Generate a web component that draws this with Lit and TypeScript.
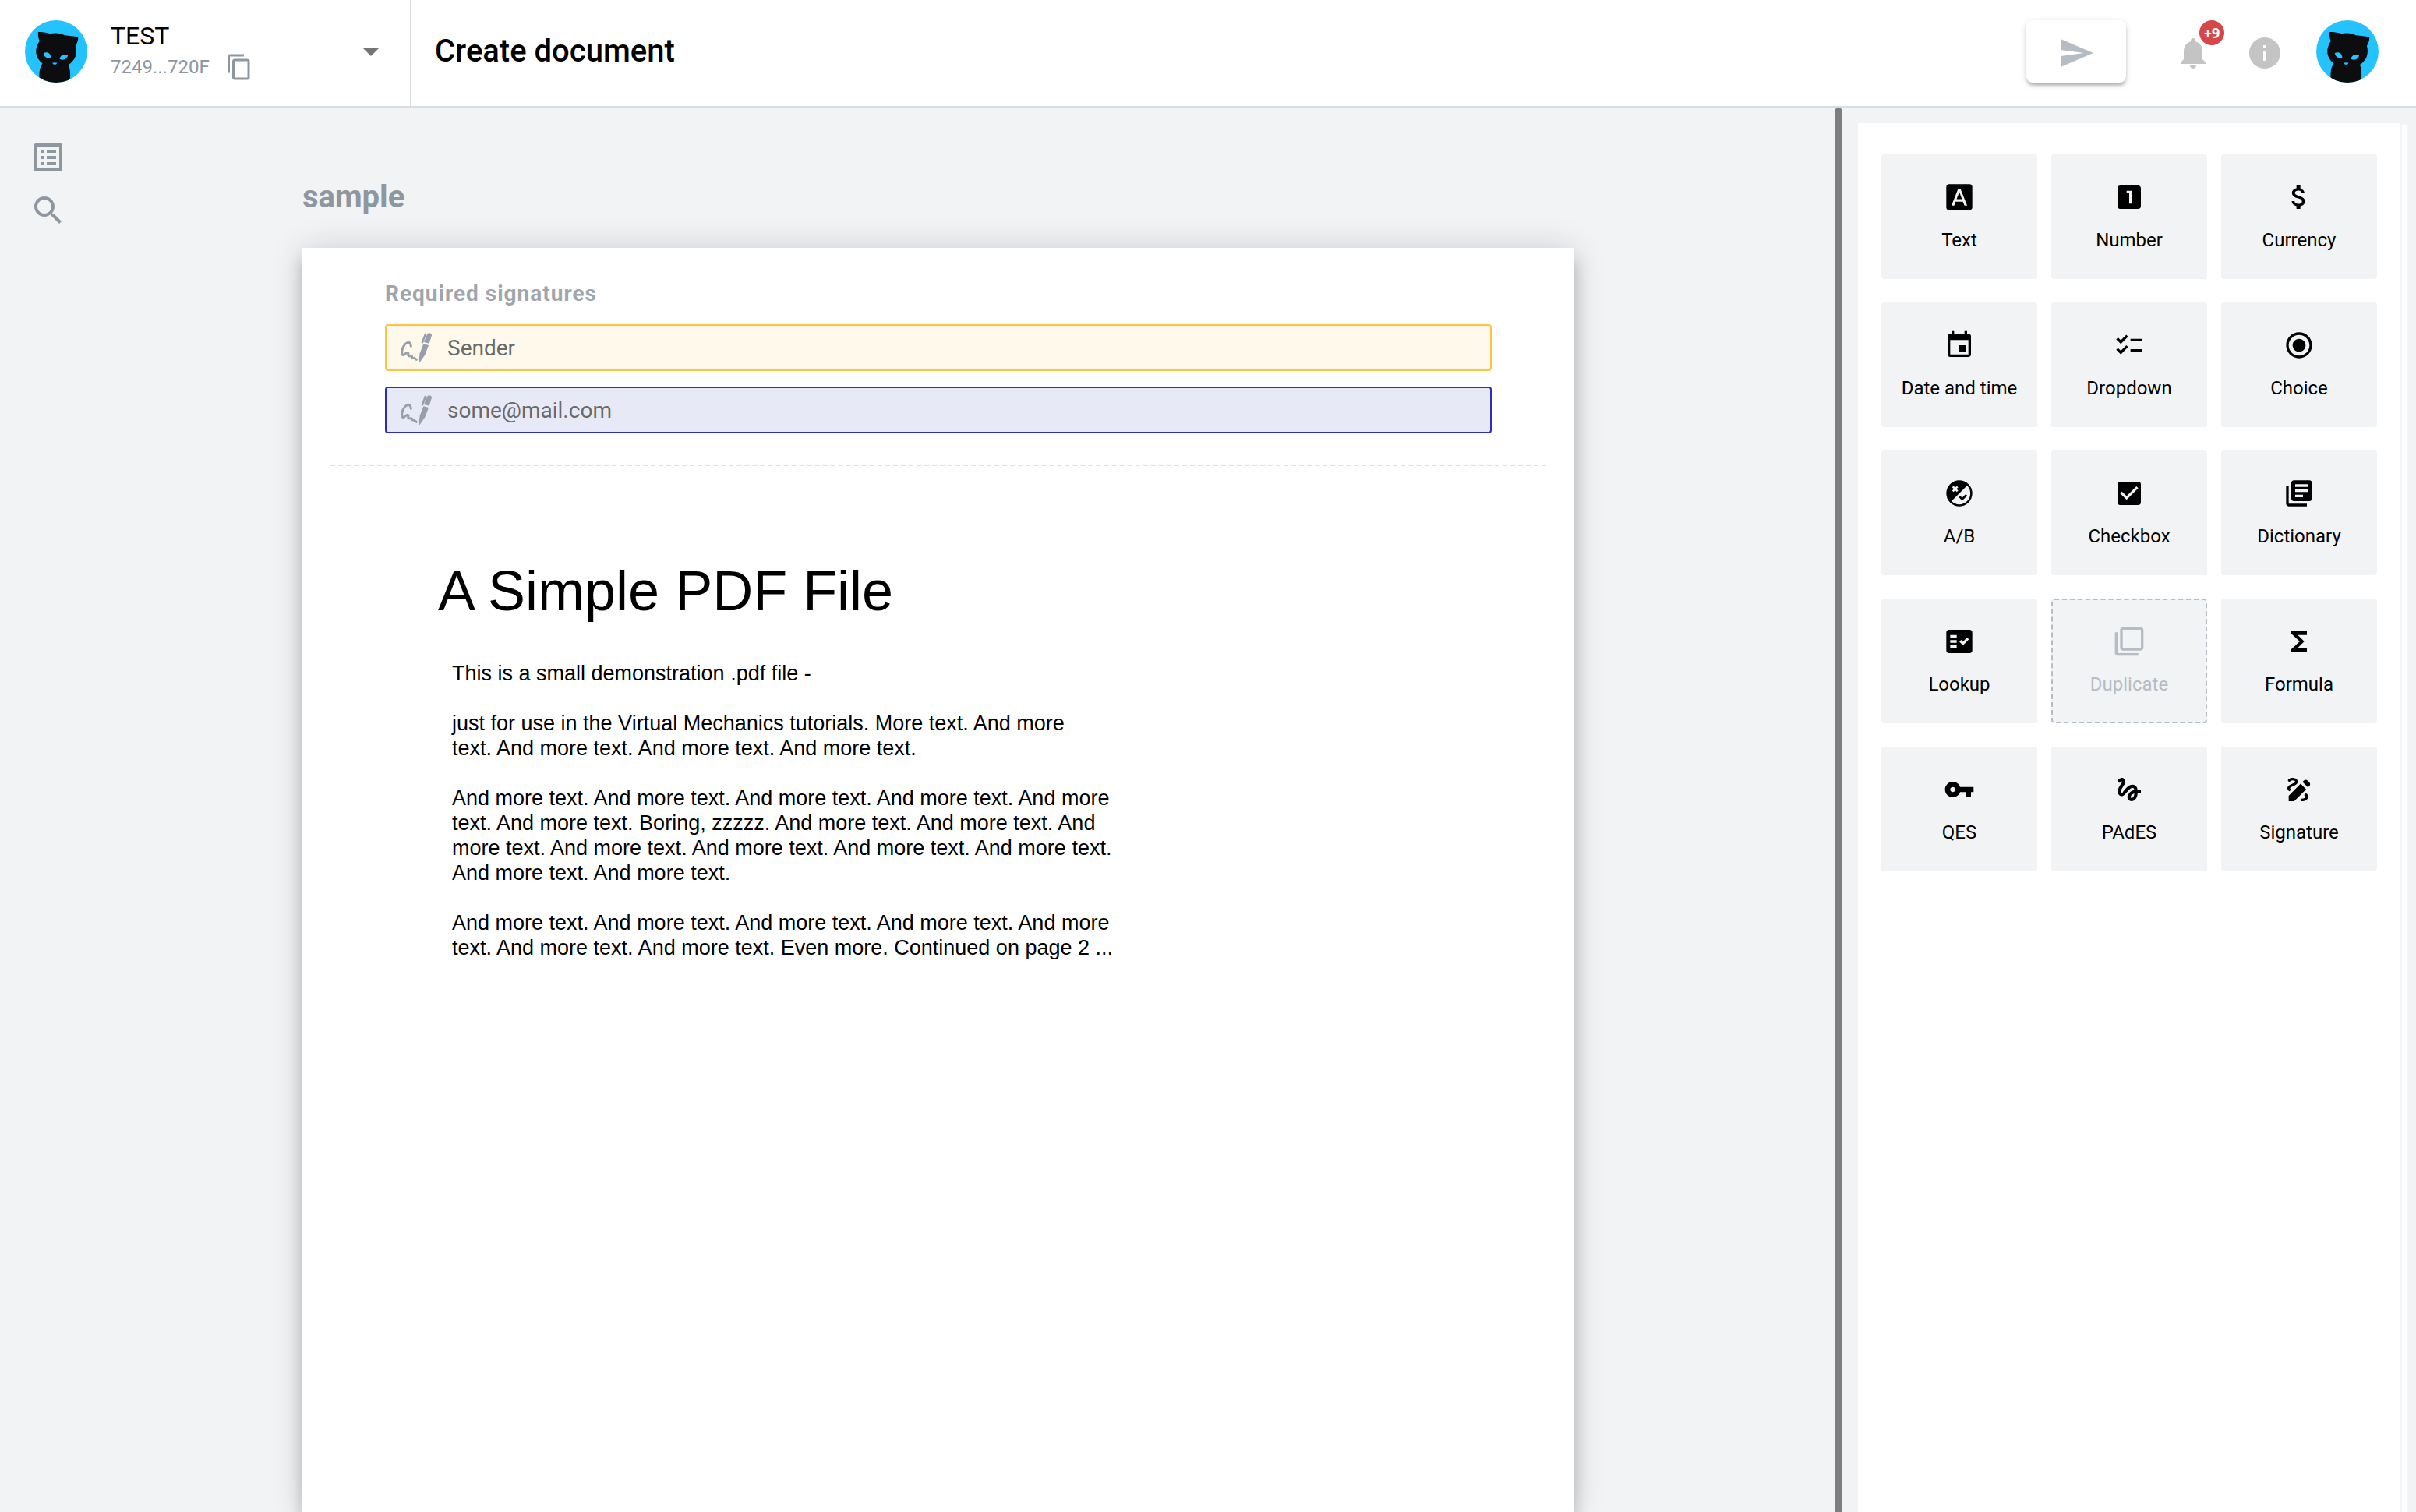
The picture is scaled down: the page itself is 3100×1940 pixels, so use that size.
import { LitElement, html, css, svg } from "lit";
import { customElement, property } from "lit/decorators.js";
import { classMap } from "lit/directives/class-map.js";

const ICONS: Record<string, unknown> = {
  copy: svg`<path d="M16 1H4c-1.1 0-2 .9-2 2v14h2V3h12V1zm3 4H8c-1.1 0-2 .9-2 2v14c0 1.1.9 2 2 2h11c1.1 0 2-.9 2-2V7c0-1.1-.9-2-2-2zm0 16H8V7h11v14z"/>`,
  caret: svg`<path d="M7 10l5 5 5-5z"/>`,
  list: svg`<path d="M19 5v14H5V5h14m1.1-2H3.9c-.5 0-.9.4-.9.9v16.2c0 .4.4.9.9.9h16.2c.4 0 .9-.5.9-.9V3.9c0-.5-.5-.9-.9-.9zM11 7h6v2h-6V7zm0 4h6v2h-6v-2zm0 4h6v2h-6v-2zM7 7h2v2H7V7zm0 4h2v2H7v-2zm0 4h2v2H7v-2z"/>`,
  search: svg`<path d="M15.5 14h-.79l-.28-.27C15.41 12.59 16 11.11 16 9.5 16 5.91 13.09 3 9.5 3S3 5.91 3 9.5 5.91 16 9.5 16c1.61 0 3.09-.59 4.23-1.57l.27.28v.79l5 4.99L20.49 19l-4.99-5zm-6 0C7.01 14 5 11.99 5 9.5S7.01 5 9.5 5 14 7.01 14 9.5 11.99 14 9.5 14z"/>`,
  send: svg`<path d="M2.01 21L23 12 2.01 3 2 10l15 2-15 2z"/>`,
  bell: svg`<path d="M12 22c1.1 0 2-.9 2-2h-4c0 1.1.9 2 2 2zm6-6v-5c0-3.07-1.63-5.64-4.5-6.32V4c0-.83-.67-1.5-1.5-1.5s-1.5.67-1.5 1.5v.68C7.64 5.36 6 7.92 6 11v5l-2 2v1h16v-1l-2-2z"/>`,
  info: svg`<path d="M12 2C6.48 2 2 6.48 2 12s4.48 10 10 10 10-4.48 10-10S17.52 2 12 2zm1 15h-2v-6h2v6zm0-8h-2V7h2v2z"/>`,
  text: svg`<path d="M9.93 13.5h4.14L12 7.98zM20 2H4c-1.1 0-2 .9-2 2v16c0 1.1.9 2 2 2h16c1.1 0 2-.9 2-2V4c0-1.1-.9-2-2-2zm-4.05 16.5l-1.14-3H9.17l-1.12 3H5.96l5.11-13h1.86l5.11 13h-2.09z"/>`,
  number: svg`<path d="M19 3H5c-1.1 0-2 .9-2 2v14c0 1.1.9 2 2 2h14c1.1 0 2-.9 2-2V5c0-1.1-.9-2-2-2zm-5 14h-2V9h-2V7h4v10z"/>`,
  currency: svg`<path d="M11.8 10.9c-2.27-.59-3-1.2-3-2.15 0-1.09 1.01-1.85 2.7-1.85 1.78 0 2.44.85 2.5 2.1h2.21c-.07-1.72-1.12-3.3-3.21-3.81V3h-3v2.16c-1.94.42-3.5 1.68-3.5 3.61 0 2.31 1.91 3.46 4.7 4.13 2.5.6 3 1.48 3 2.41 0 .69-.49 1.79-2.7 1.79-2.06 0-2.87-.92-2.98-2.1h-2.2c.12 2.19 1.76 3.42 3.68 3.83V21h3v-2.15c1.95-.37 3.5-1.5 3.5-3.55 0-2.84-2.43-3.81-4.7-4.4z"/>`,
  date: svg`<path d="M17 12h-5v5h5v-5zM16 1v2H8V1H6v2H5c-1.11 0-1.99.9-1.99 2L3 19c0 1.1.89 2 2 2h14c1.1 0 2-.9 2-2V5c0-1.1-.9-2-2-2h-1V1h-2zm3 18H5V8h14v11z"/>`,
  dropdown: svg`<path d="M22 7h-9v2h9V7zm0 8h-9v2h9v-2zM5.54 11L2 7.46l1.41-1.41 2.12 2.12 4.24-4.24 1.41 1.41L5.54 11zm0 8L2 15.46l1.41-1.41 2.12 2.12 4.24-4.24 1.41 1.41L5.54 19z"/>`,
  choice: svg`<path d="M12 7c-2.76 0-5 2.24-5 5s2.24 5 5 5 5-2.24 5-5-2.24-5-5-5zm0-5C6.48 2 2 6.48 2 12s4.48 10 10 10 10-4.48 10-10S17.52 2 12 2zm0 18c-4.42 0-8-3.58-8-8s3.58-8 8-8 8 3.58 8 8-3.58 8-8 8z"/>`,
  ab: svg`<circle cx="12" cy="12" r="10"/>
    <path fill="#f1f3f5" d="M18 6 6 18A8.4 8.4 0 0 0 18 6z"/>
    <path d="M7 6.800l3.600 3.600m0-3.600L7 10.400" fill="none" stroke="#f1f3f5" stroke-width="1.600"/>
    <path d="M12.200 14.500l2 2 3.300-3.300" fill="none" stroke="currentColor" stroke-width="1.600"/>`,
  checkbox: svg`<path d="M19 3H5c-1.11 0-2 .9-2 2v14c0 1.1.89 2 2 2h14c1.11 0 2-.9 2-2V5c0-1.1-.89-2-2-2zm-9 14l-5-5 1.41-1.41L10 14.17l7.59-7.59L19 8l-9 9z"/>`,
  dictionary: svg`<path d="M4 6H2v14c0 1.1.9 2 2 2h14v-2H4V6zm16-4H8c-1.1 0-2 .9-2 2v12c0 1.1.9 2 2 2h12c1.1 0 2-.9 2-2V4c0-1.1-.9-2-2-2zm-1 9H9V9h10v2zm-4 4H9v-2h6v2zm4-8H9V5h10v2z"/>`,
  lookup: svg`<path fill-rule="evenodd" d="M20,3H4C2.9,3,2,3.9,2,5v14c0,1.1,0.9,2,2,2h16c1.1,0,2-0.9,2-2V5C22,3.9,21.1,3,20,3z M10,17H5v-2h5V17z M10,13H5v-2h5V13z M10,9H5V7h5V9z M14.82,15L12,12.16l1.41-1.41l1.41,1.42L17.99,9l1.42,1.42L14.82,15z"/>`,
  duplicate: svg`<path d="M3 5H1v16c0 1.1.9 2 2 2h16v-2H3V5zm18-4H7c-1.1 0-2 .9-2 2v14c0 1.1.9 2 2 2h14c1.1 0 2-.9 2-2V3c0-1.1-.9-2-2-2zm0 16H7V3h14v14z"/>`,
  formula: svg`<path d="M18 4H6v2l6.5 6L6 18v2h12v-3h-7l5-5-5-5h7z"/>`,
  qes: svg`<path d="M12.65 10C11.83 7.67 9.61 6 7 6c-3.31 0-6 2.69-6 6s2.69 6 6 6c2.61 0 4.83-1.67 5.65-4H17v4h4v-4h2v-4H12.65zM7 14c-1.1 0-2-.9-2-2s.9-2 2-2 2 .9 2 2-.9 2-2 2z"/>`,
  pades: svg`<path d="M4.59 6.89c.7-.71 1.4-1.35 1.71-1.22.5.2 0 1.03-.3 1.52-.25.42-2.86 3.89-2.86 6.31 0 1.28.48 2.34 1.34 2.98.75.56 1.74.73 2.64.46 1.07-.31 1.95-1.4 3.06-2.77 1.21-1.49 2.83-3.44 4.08-3.44 1.63 0 1.65 1.01 1.76 1.79-3.78.64-5.38 3.67-5.38 5.37 0 1.7 1.44 3.09 3.21 3.09 1.63 0 4.29-1.33 4.69-6.1H21v-2.5h-2.47c-.15-1.65-1.09-4.2-4.03-4.2-2.25 0-4.18 1.91-4.94 2.84-.58.73-2.06 2.48-2.29 2.72-.25.3-.68.84-1.11.84-.45 0-.72-.83-.36-1.92.35-1.09 1.4-2.86 1.85-3.52.78-1.14 1.3-1.92 1.3-3.28C8.95 3.69 7.31 3 6.44 3 5.12 3 3.97 4 3.72 4.25c-.36.36-.66.66-.88.93l1.75 1.71zm9.29 11.66c-.31 0-.74-.26-.74-.72 0-.6.73-2.2 2.87-2.76-.3 2.69-1.43 3.48-2.13 3.48z"/>`,
  signature: svg`<path d="M18.85 10.39l1.06-1.06c.78-.78.78-2.05 0-2.83L18.5 5.09c-.78-.78-2.05-.78-2.83 0l-1.06 1.06 4.24 4.24zm-5.66-2.83L4 16.76V21h4.24l9.19-9.19-4.24-4.25zM19 17.5c0 2.19-2.54 3.5-5 3.5-.55 0-1-.45-1-1s.45-1 1-1c1.54 0 3-.73 3-1.5 0-.47-.48-.87-1.23-1.2l1.48-1.48c1.07.63 1.75 1.47 1.75 2.68zM4.58 13.35C3.61 12.79 3 12.06 3 11c0-1.8 1.89-2.63 3.56-3.36C7.59 7.18 9 6.56 9 6c0-.41-.78-1-2-1-1.26 0-1.8.61-1.83.64-.35.41-.98.46-1.4.12-.41-.34-.49-.95-.15-1.38C3.73 4.24 4.76 3 7 3s4 1.32 4 3c0 1.87-1.93 2.72-3.64 3.47C6.42 9.88 5 10.5 5 11c0 .31.43.6 1.07.86l-1.49 1.49z"/>`,
};

@customElement("ui-icon")
class UiIcon extends LitElement {
  @property() name = "";
  static styles = css`
    :host {
      display: block;
      flex: none;
      width: 48px;
      height: 48px;
    }
    .glyph {
      display: block;
      width: 100%;
      height: 100%;
      fill: currentColor;
    }
  `;
  render() {
    return html`<svg class="glyph" viewBox="0 0 24 24" aria-hidden="true">${ICONS[this.name]}</svg>`;
  }
}

@customElement("cat-avatar")
class CatAvatar extends LitElement {
  static styles = css`
    :host {
      display: block;
      flex: none;
      width: 80px;
      height: 80px;
      border-radius: 50%;
      overflow: hidden;
    }
    .face {
      display: block;
      width: 100%;
      height: 100%;
    }
  `;
  render() {
    return html`<svg class="face" viewBox="0 0 80 80" aria-hidden="true">
      <rect width="80" height="80" fill="#24c3ff" />
      <path
        fill="#0d0d10"
        d="M17 15C22 15 28 15.500 32.500 17.300C39 15.500 47 17 51 19.200C57 19.800 63 20.500 68.300 21.500C68.300 26 67 29.500 65 32.500C67.500 43 65 51 56 57C58.500 64 58.500 70 57.500 80L19 80C18 70 18 61 22.500 55.500C13 48 11.500 37 18.800 26.500C17 23 16.500 19 17 15z"
      />
      <path fill="#24c3ff" d="M23.800 42C29 40 33 42.500 33.500 48.300C28 49.500 24.500 47 23.800 42z" />
      <path fill="#24c3ff" d="M44.500 49.800C45.500 44.500 50 43 55.200 44.800C54 50 49.500 52 44.500 49.800z" />
      <path fill="#24c3ff" d="M35 54.700Q38.300 53.800 41.600 54.700Q38.300 59.500 35 54.700z" />
    </svg>`;
  }
}

@customElement("field-tile")
class FieldTile extends LitElement {
  @property() icon = "";
  @property() label = "";
  @property({ type: Boolean }) off = false;
  static styles = css`
    :host {
      display: block;
    }
    .tile {
      display: flex;
      flex-direction: column;
      align-items: center;
      justify-content: center;
      gap: 20px;
      box-sizing: border-box;
      width: 100%;
      height: 160px;
      margin: 0;
      padding: 0;
      border: 2px solid transparent;
      border-radius: 4px;
      background: #f1f3f5;
      color: #000;
      font: 400 24px/30px Roboto, sans-serif;
      white-space: nowrap;
    }
    .tile.off {
      border: 2px dashed #b6bcc4;
      color: #b6bcc4;
    }
    .icon {
      width: 40px;
      height: 40px;
    }
  `;
  render() {
    return html`<button class=${classMap({ tile: true, off: this.off })} type="button" ?disabled=${this.off}>
      <ui-icon class="icon" name=${this.icon}></ui-icon>
      <span>${this.label}</span>
    </button>`;
  }
}

const TILES = [
  ["text", "Text"],
  ["number", "Number"],
  ["currency", "Currency"],
  ["date", "Date and time"],
  ["dropdown", "Dropdown"],
  ["choice", "Choice"],
  ["ab", "A/B"],
  ["checkbox", "Checkbox"],
  ["dictionary", "Dictionary"],
  ["lookup", "Lookup"],
  ["duplicate", "Duplicate"],
  ["formula", "Formula"],
  ["qes", "QES"],
  ["pades", "PAdES"],
  ["signature", "Signature"],
];

const SIGNERS = [
  { name: "Sender", tone: "amber" },
  { name: "some@mail.com", tone: "indigo" },
];

@customElement("app-root")
class AppRoot extends LitElement {
  static styles = css`
    :host {
      display: flex;
      flex-direction: column;
      height: 100vh;
      overflow: hidden;
      background: #f1f3f5;
      color: #000;
      font-family: Roboto, sans-serif;
    }
    button {
      margin: 0;
      padding: 0;
      border: 0;
      background: none;
      color: inherit;
      font: inherit;
    }
    .topbar {
      display: flex;
      flex: none;
      height: 136px;
      border-bottom: 2px solid #dadde0;
      background: #fff;
    }
    .account {
      display: flex;
      align-items: center;
      box-sizing: border-box;
      width: 528px;
      padding: 0 26px 4px 32px;
      border-right: 2px solid #dadde0;
    }
    .who {
      display: flex;
      flex: 1;
      flex-direction: column;
      gap: 2px;
      margin-left: 30px;
      padding-bottom: 2px;
    }
    .name {
      font-size: 32px;
      line-height: 40px;
    }
    .ident {
      display: flex;
      align-items: center;
      gap: 20px;
      color: #8e979f;
      font-size: 24px;
      line-height: 36px;
    }
    .small {
      width: 36px;
      height: 36px;
    }
    .more {
      color: #757575;
    }
    .heading {
      flex: 1;
      margin: 0;
      padding: 0 0 4px 30px;
      align-self: center;
      font-size: 40px;
      font-weight: 500;
      line-height: 48px;
    }
    .actions {
      display: flex;
      align-items: center;
      padding: 0 48px 4px 0;
      color: #c4c4c4;
    }
    .send {
      display: flex;
      align-items: center;
      justify-content: center;
      box-sizing: border-box;
      width: 128px;
      height: 80px;
      margin-right: 62px;
      padding-top: 4px;
      border-radius: 8px;
      background: #fff;
      box-shadow: 0 6px 4px -4px rgba(0, 0, 0, 0.2), 0 4px 4px rgba(0, 0, 0, 0.14), 0 2px 10px rgba(0, 0, 0, 0.12);
      color: #b6bcc4;
    }
    .alerts {
      position: relative;
      margin-right: 44px;
      padding-top: 4px;
    }
    .badge {
      position: absolute;
      top: -14px;
      left: 32px;
      width: 32px;
      height: 32px;
      border-radius: 50%;
      background: #d64848;
      color: #fff;
      font: 700 18px/32px "Noto Sans", sans-serif;
      text-align: center;
    }
    .about {
      margin-right: 42px;
      padding-top: 4px;
    }
    .workspace {
      display: flex;
      flex: 1;
      min-height: 0;
    }
    .rail {
      display: flex;
      flex: none;
      flex-direction: column;
      gap: 20px;
      padding: 40px 0 0 38px;
      color: #8e979f;
    }
    .canvas {
      display: flex;
      flex: 1;
      flex-direction: column;
      padding: 90px 334px 0 302px;
    }
    .docname {
      margin: 0;
      padding-bottom: 40px;
      color: #8e979f;
      font-size: 40px;
      font-weight: 700;
      line-height: 50px;
    }
    .sheet {
      flex: 1;
      padding: 42px 36px 0;
      background: #fff;
      box-shadow: 0 0 40px rgba(0, 0, 0, 0.14), 0 16px 20px rgba(0, 0, 0, 0.2);
    }
    .required {
      padding: 0 70px 40px;
      border-bottom: 2px dashed #e0e0e0;
    }
    .caption {
      margin: 0 0 22px;
      color: #9ea5ad;
      font-size: 28px;
      font-weight: 700;
      line-height: 34px;
      letter-spacing: 1px;
    }
    .signers {
      display: flex;
      flex-direction: column;
      gap: 20px;
      margin: 0;
      padding: 0;
      list-style: none;
    }
    .signer {
      display: flex;
      align-items: center;
      gap: 20px;
      box-sizing: border-box;
      height: 60px;
      padding: 0 18px;
      border: 2px solid;
      border-radius: 4px;
    }
    .amber {
      border-color: #ffc442;
      background: #fff9eb;
    }
    .indigo {
      border-color: #2d2dbd;
      background: #e8e9f6;
    }
    .pen {
      flex: none;
      width: 40px;
      height: 40px;
      color: #989eaa;
    }
    .signer-name {
      padding-top: 2px;
      color: #696969;
      font-size: 28px;
      line-height: 32px;
    }
    .pdf {
      padding: 118px 138px 0;
      font-family: "Liberation Sans", Arial, sans-serif;
    }
    .pdf-title {
      margin: 0 0 48px;
      font-size: 72px;
      font-weight: 400;
      line-height: 84px;
    }
    .pdf-body {
      display: flex;
      flex-direction: column;
      gap: 32px;
      padding-left: 18px;
      font-size: 27px;
      line-height: 32px;
      white-space: nowrap;
    }
    .pdf-line {
      margin: 0;
    }
    .splitter {
      flex: none;
      width: 10px;
      border-radius: 5px 5px 0 0;
      background: #7d7e80;
    }
    .side {
      display: flex;
      flex: none;
      padding: 20px 10px 0 20px;
    }
    .palette {
      display: grid;
      grid-template-columns: repeat(3, 200px);
      align-content: start;
      gap: 30px 18px;
      padding: 40px 30px;
      background: #fff;
    }
    .track {
      box-sizing: border-box;
      width: 10px;
      border: 2px solid #f5f5f6;
      border-bottom: 0;
      border-radius: 5px 5px 0 0;
      background: #fff;
    }
  `;

  private pen() {
    return html`<svg class="pen" viewBox="0 0 120 120" aria-hidden="true">
      <path
        fill="none"
        stroke="currentColor"
        stroke-width="9"
        stroke-linecap="round"
        stroke-linejoin="round"
        d="M40 55C39 43 33 38 26 41C13 46 5 64 5 78C5 90 10 91 16 85C23 79 30 77 30 83C29 88 28 91 33 92L43 93L44 98C50 97 56 102 61 106"
      />
      <path fill="currentColor" d="M88 46L108 51L94 88L73 118L70 112L74 82z" />
      <path fill="currentColor" d="M102 9C106 1 120 3 120 13L110 44L90 39z" />
      <path fill="none" stroke="currentColor" stroke-width="8" d="M97 6L83 42" />
    </svg>`;
  }

  render() {
    return html`
      <header class="topbar">
        <div class="account">
          <cat-avatar></cat-avatar>
          <div class="who">
            <span class="name">TEST</span>
            <span class="ident">
              7249...720F
              <button type="button" aria-label="Copy"><ui-icon class="small" name="copy"></ui-icon></button>
            </span>
          </div>
          <button class="more" type="button" aria-label="Accounts"><ui-icon name="caret"></ui-icon></button>
        </div>
        <h1 class="heading">Create document</h1>
        <div class="actions">
          <button class="send" type="button" aria-label="Send"><ui-icon name="send"></ui-icon></button>
          <button class="alerts" type="button" aria-label="Notifications">
            <ui-icon name="bell"></ui-icon>
            <span class="badge">+9</span>
          </button>
          <button class="about" type="button" aria-label="Info"><ui-icon name="info"></ui-icon></button>
          <button type="button" aria-label="Profile"><cat-avatar></cat-avatar></button>
        </div>
      </header>
      <div class="workspace">
        <nav class="rail">
          <button type="button" aria-label="Pages"><ui-icon name="list"></ui-icon></button>
          <button type="button" aria-label="Search"><ui-icon name="search"></ui-icon></button>
        </nav>
        <main class="canvas">
          <h2 class="docname">sample</h2>
          <article class="sheet">
            <section class="required">
              <h3 class="caption">Required signatures</h3>
              <ul class="signers">
                ${SIGNERS.map(
                  (s) => html`<li class=${classMap({ signer: true, [s.tone]: true })}>
                    ${this.pen()}<span class="signer-name">${s.name}</span>
                  </li>`
                )}
              </ul>
            </section>
            <section class="pdf">
              <h1 class="pdf-title">A Simple PDF File</h1>
              <div class="pdf-body">
                <p class="pdf-line">This is a small demonstration .pdf file -</p>
                <p class="pdf-line">
                  just for use in the Virtual Mechanics tutorials. More text. And more<br />text. And more text. And
                  more text. And more text.
                </p>
                <p class="pdf-line">
                  And more text. And more text. And more text. And more text. And more<br />text. And more text. Boring,
                  zzzzz. And more text. And more text. And<br />more text. And more text. And more text. And more text.
                  And more text.<br />And more text. And more text.
                </p>
                <p class="pdf-line">
                  And more text. And more text. And more text. And more text. And more<br />text. And more text. And
                  more text. Even more. Continued on page 2 ...
                </p>
              </div>
            </section>
          </article>
        </main>
        <div class="splitter"></div>
        <aside class="side">
          <div class="palette">
            ${TILES.map(
              ([icon, label]) =>
                html`<field-tile icon=${icon} label=${label} ?off=${icon === "duplicate"}></field-tile>`
            )}
          </div>
          <div class="track"></div>
        </aside>
      </div>
    `;
  }
}
